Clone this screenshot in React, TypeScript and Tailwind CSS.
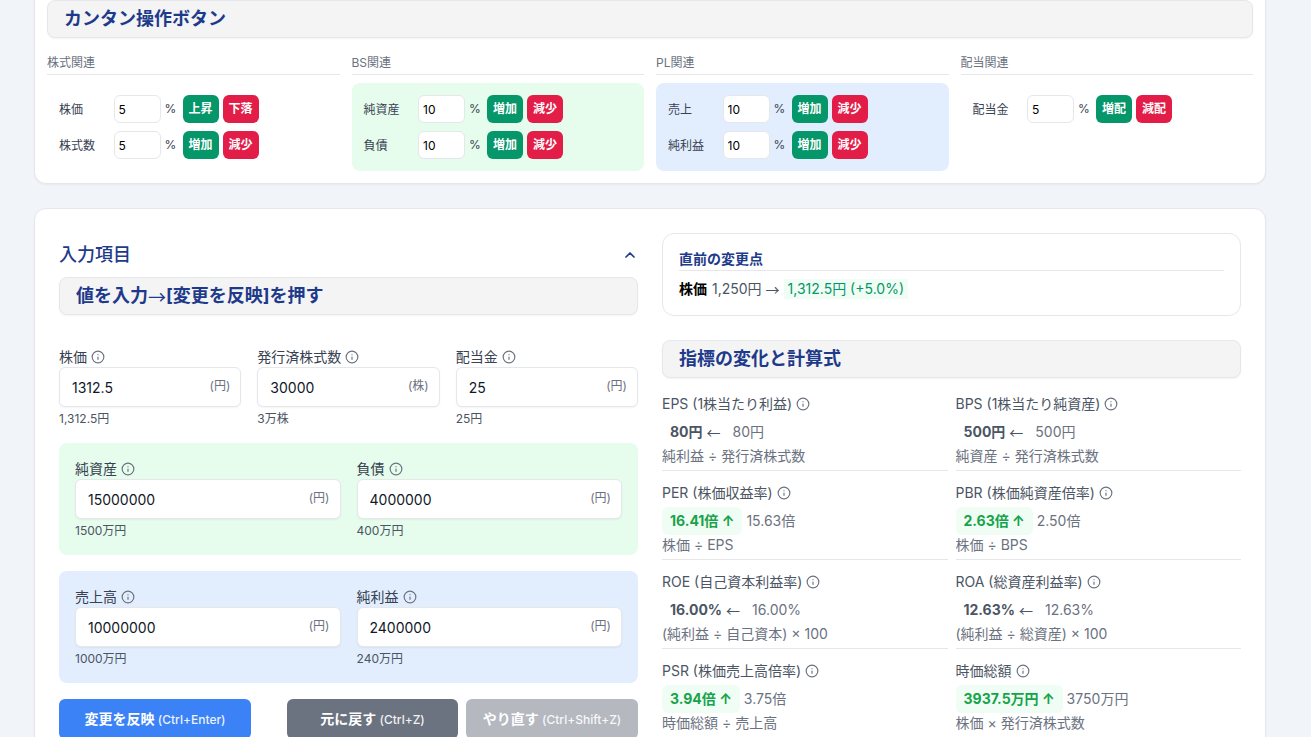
import React from 'react';
import { ChevronUp, Info } from 'lucide-react';

const FONT = "font-['Inter','Noto_Sans_CJK_JP',sans-serif]";
const ARROW = "font-['Noto_Sans_CJK_JP',sans-serif] font-normal";

const SectionHeader = ({ children }: { children: React.ReactNode }) => (
  <div className="h-[38px] flex items-center px-4 bg-[#f4f4f5] border border-[#e5e7eb] rounded-lg shadow-xs text-lg font-bold text-[#1e3a8a]">
    {children}
  </div>
);

const QuickRow = ({ label, value, up, down }: { label: string; value: string; up: string; down: string }) => (
  <div className="flex items-center h-7">
    <span className="w-[54.5px] mt-px text-xs text-[#374151]">{label}</span>
    <input
      readOnly
      defaultValue={value}
      className="w-[47px] h-7 pl-1 bg-white border border-[#e5e7eb] rounded-md text-xs text-black outline-none"
    />
    <span className="ml-1 w-[18px] text-xs text-[#374151]">%</span>
    <button className="w-9 h-7 rounded-md bg-[#059669] text-white text-xs font-bold">{up}</button>
    <button className="ml-1 w-9 h-7 rounded-md bg-[#e11d48] text-white text-xs font-bold">{down}</button>
  </div>
);

const QuickGroup = ({ title, bg, children }: { title: string; bg: string; children: React.ReactNode }) => (
  <div>
    <div className="h-[27px] border-b border-[#e5e7eb] text-xs leading-[29px] text-[#6b7280]">{title}</div>
    <div className={`mt-2 h-[88px] p-3 rounded-lg flex flex-col gap-2 ${bg}`}>{children}</div>
  </div>
);

const Field = ({ label, value, unit, note }: { label: string; value: string; unit: string; note: string }) => (
  <div className="min-w-0">
    <div className="h-5 flex items-center gap-1 text-sm text-[#374151]">
      {label}
      <Info size={14} className="text-[#6b7280]" />
    </div>
    <div className="relative h-10 bg-white border border-[#e5e7eb] rounded-md shadow-xs">
      <input
        readOnly
        defaultValue={value}
        className="w-full h-full pl-3 pr-10 text-sm text-[#111827] bg-transparent outline-none"
      />
      <span className="absolute right-2.5 top-[10px] text-xs text-[#6b7280]">{unit}</span>
    </div>
    <div className="mt-1 text-xs leading-4 text-[#4b5563]">{note}</div>
  </div>
);

const Metric = ({
  label,
  now,
  before,
  formula,
  rise,
  border = true,
}: {
  label: string;
  now: string;
  before: string;
  formula: string;
  rise?: boolean;
  border?: boolean;
}) => (
  <div className={`h-[89px] pt-3 ${border ? 'border-b border-[#e5e7eb]' : ''}`}>
    <div className="h-5 flex items-center gap-1 text-sm text-[#4b5563]">
      {label}
      <Info size={14} className="text-[#6b7280]" />
    </div>
    <div className="mt-1 flex items-center h-7 text-sm">
      <span
        className={`h-7 px-2 flex items-center gap-1 rounded-md font-bold whitespace-nowrap ${
          rise ? 'bg-[#f0fdf4] text-[#16a34a]' : 'text-[#4b5563]'
        }`}
      >
        {now} {rise ? '↑' : <span className={ARROW}>←</span>}
      </span>
      <span className="ml-1 text-[#6b7280]">{before}</span>
    </div>
    <div className="text-sm leading-5 text-[#6b7280]">{formula}</div>
  </div>
);

export default function App() {
  return (
    <div className={`h-[737px] overflow-hidden bg-[#f1f5f9] ${FONT}`}>
      <div className="w-[1232px] ml-[34px] -mt-[14px] pt-px">
        <section className="h-[197px] p-3 bg-white rounded-xl border border-[#e5e7eb] shadow-xs">
          <SectionHeader>カンタン操作ボタン</SectionHeader>
          <div className="mt-[10px] grid grid-cols-4 gap-3">
            <QuickGroup title="株式関連" bg="">
              <QuickRow label="株価" value="5" up="上昇" down="下落" />
              <QuickRow label="株式数" value="5" up="増加" down="減少" />
            </QuickGroup>
            <QuickGroup title="BS関連" bg="bg-[#e6fcec]">
              <QuickRow label="純資産" value="10" up="増加" down="減少" />
              <QuickRow label="負債" value="10" up="増加" down="減少" />
            </QuickGroup>
            <QuickGroup title="PL関連" bg="bg-[#e2eefd]">
              <QuickRow label="売上" value="10" up="増加" down="減少" />
              <QuickRow label="純利益" value="10" up="増加" down="減少" />
            </QuickGroup>
            <QuickGroup title="配当関連" bg="">
              <QuickRow label="配当金" value="5" up="増配" down="減配" />
            </QuickGroup>
          </div>
        </section>

        <section className="mt-6 h-[600px] px-6 pt-6 bg-white rounded-xl border border-[#e5e7eb] shadow-xs grid grid-cols-2 gap-6">
          <div>
            <div className="h-11 flex items-center justify-between">
              <span className="text-lg font-medium text-[#1e3a8a]">入力項目</span>
              <ChevronUp size={16} strokeWidth={2.5} className="text-[#1e3a8a]" />
            </div>
            <SectionHeader>
              値を入力<span className={ARROW}>→</span>[変更を反映]を押す
            </SectionHeader>
            <div className="mt-[32px] grid grid-cols-3 gap-4">
              <Field label="株価" value="1312.5" unit="(円)" note="1,312.5円" />
              <Field label="発行済株式数" value="30000" unit="(株)" note="3万株" />
              <Field label="配当金" value="25" unit="(円)" note="25円" />
            </div>
            <div className="mt-4 h-[112px] px-4 pt-4 rounded-lg bg-[#e6fcec] grid grid-cols-2 gap-4">
              <Field label="純資産" value="15000000" unit="(円)" note="1500万円" />
              <Field label="負債" value="4000000" unit="(円)" note="400万円" />
            </div>
            <div className="mt-4 h-[112px] px-4 pt-4 rounded-lg bg-[#e2eefd] grid grid-cols-2 gap-4">
              <Field label="売上高" value="10000000" unit="(円)" note="1000万円" />
              <Field label="純利益" value="2400000" unit="(円)" note="240万円" />
            </div>
            <div className="mt-4 flex">
              <button className="w-[192px] h-10 rounded-md bg-[#3b82f6] text-white text-sm font-bold">
                変更を反映 <span className="text-xs font-medium opacity-90">(Ctrl+Enter)</span>
              </button>
              <button className="ml-9 w-[171px] h-10 rounded-md bg-[#6b7280] text-white text-sm font-bold">
                元に戻す <span className="text-xs font-medium opacity-90">(Ctrl+Z)</span>
              </button>
              <button className="ml-2 flex-1 h-10 rounded-md bg-[#b5b8bf] text-white text-sm font-bold whitespace-nowrap">
                やり直す <span className="text-xs font-medium opacity-90">(Ctrl+Shift+Z)</span>
              </button>
            </div>
          </div>

          <div>
            <div className="h-[83px] px-4 pt-4 border border-[#e5e7eb] rounded-xl">
              <div className="h-[21px] border-b border-[#e5e7eb] text-sm leading-[18px] font-bold text-[#1e3a8a]">直前の変更点</div>
              <div className="mt-2 h-5 flex items-center text-sm text-[#4b5563]">
                <span className="font-bold text-black">株価</span>
                <span className="ml-[5px]">1,250円</span>
                <span className={`ml-1 ${ARROW}`}>→</span>
                <span className="ml-1 px-1 bg-[#f0fdf4] text-[#059669]">1,312.5円 (+5.0%)</span>
              </div>
            </div>
            <div className="mt-6">
              <SectionHeader>指標の変化と計算式</SectionHeader>
            </div>
            <div className="mt-[4px] grid grid-cols-2 gap-x-2">
              <Metric label="EPS (1株当たり利益)" now="80円" before="80円" formula="純利益 ÷ 発行済株式数" />
              <Metric label="BPS (1株当たり純資産)" now="500円" before="500円" formula="純資産 ÷ 発行済株式数" />
              <Metric label="PER (株価収益率)" now="16.41倍" before="15.63倍" formula="株価 ÷ EPS" rise />
              <Metric label="PBR (株価純資産倍率)" now="2.63倍" before="2.50倍" formula="株価 ÷ BPS" rise />
              <Metric label="ROE (自己資本利益率)" now="16.00%" before="16.00%" formula="(純利益 ÷ 自己資本) × 100" />
              <Metric label="ROA (総資産利益率)" now="12.63%" before="12.63%" formula="(純利益 ÷ 総資産) × 100" />
              <Metric label="PSR (株価売上高倍率)" now="3.94倍" before="3.75倍" formula="時価総額 ÷ 売上高" rise border={false} />
              <Metric label="時価総額" now="3937.5万円" before="3750万円" formula="株価 × 発行済株式数" rise border={false} />
            </div>
          </div>
        </section>
      </div>
    </div>
  );
}
